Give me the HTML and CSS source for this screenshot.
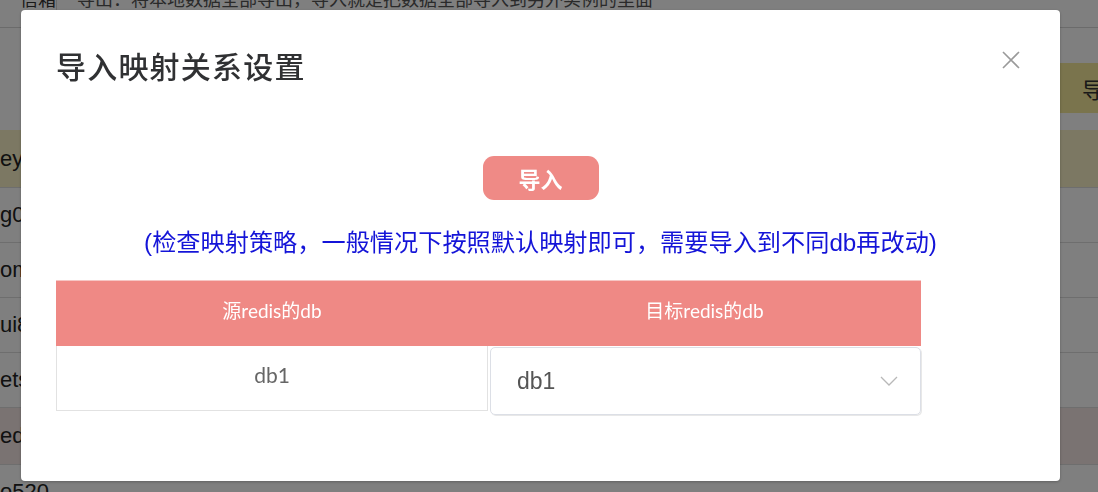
FILE: index.html
```html
<!DOCTYPE html>
<html lang="zh-CN">
<head>
<meta charset="utf-8">
<title>导入映射关系设置</title>
<link rel="stylesheet" href="styles.css">
</head>
<body>
<div class="page">
  <div class="topbar">
    <span class="tb-left">信箱</span>
    <span class="tb-text">导出：将本地数据全部导出，导入就是把数据全部导入到另外实例的里面</span>
  </div>
  <div class="toolbar">
    <div class="yellow-btn">导入</div>
  </div>
  <div class="rows">
    <div class="row hl">ey</div>
    <div class="row">g0</div>
    <div class="row">om</div>
    <div class="row">ui8</div>
    <div class="row">ets</div>
    <div class="row pink">edis</div>
    <div class="row">o520</div>
  </div>
</div>
<div class="mask"></div>
<div class="dialog">
  <div class="dialog-header">
    <h2 class="dialog-title">导入映射关系设置</h2>
    <span class="dialog-close">
      <svg width="18" height="18" viewBox="0 0 18 18"><path d="M1 1 L17 17 M17 1 L1 17" stroke="#9a9a9a" stroke-width="1.6" fill="none"/></svg>
    </span>
  </div>
  <div class="dialog-body">
    <button class="import-btn">导入</button>
    <p class="hint">(检查映射策略，一般情况下按照默认映射即可，需要导入到不同db再改动)</p>
    <div class="map-table">
      <div class="th">源redis的db</div>
      <div class="th">目标redis的db</div>
      <div class="td">db1</div>
      <div class="td-select">
        <div class="select">
          <span class="select-value">db1</span>
          <svg class="chevron" width="18" height="10" viewBox="0 0 18 10"><path d="M1 1 L9 9 L17 1" stroke="#b8b8b8" stroke-width="1.3" fill="none"/></svg>
        </div>
      </div>
    </div>
  </div>
</div>
</body>
</html>
```

FILE: styles.css
```css
html, body {
  margin: 0;
  padding: 0;
  width: 1098px;
  height: 492px;
  overflow: hidden;
  background: #ffffff;
  font-family: "Noto Sans CJK SC", "Noto Sans", sans-serif;
}

/* underlying page */
.page {
  width: 1098px;
}
.topbar {
  height: 27px;
  border-bottom: 1px solid #d6d6d6;
  display: flex;
  align-items: flex-start;
  overflow: hidden;
}
.tb-left {
  width: 57px;
  border-right: 1px solid #d6d6d6;
  height: 27px;
  font-size: 18px;
  line-height: 20px;
  margin-top: -12px;
  color: #333;
  text-align: right;
  box-sizing: border-box;
}
.tb-text {
  padding-left: 20px;
  font-size: 18px;
  line-height: 20px;
  margin-top: -12px;
  color: #555;
  white-space: nowrap;
}
.toolbar {
  height: 102px;
  display: flex;
  justify-content: flex-end;
  padding-top: 35px;
  box-sizing: border-box;
}
.yellow-btn {
  width: 140px;
  height: 50px;
  margin-right: -42px;
  background: #f4e99a;
  color: #333;
  font-size: 22px;
  line-height: 50px;
  padding-left: 82px;
  box-sizing: border-box;
  white-space: nowrap;
  overflow: hidden;
}
.rows {
  display: flex;
  flex-direction: column;
}
.row {
  height: 55px;
  border-bottom: 1px solid #dcdcdc;
  box-sizing: border-box;
  display: flex;
  align-items: center;
  font-family: "Liberation Sans", Arial, sans-serif;
  font-size: 22px;
  color: #222;
}
.row.hl {
  height: 58px;
  background: #f8f1c6;
}
.row.pink {
  height: 57px;
  background: #f4e6e5;
}

.mask {
  position: fixed;
  inset: 0;
  background: rgba(0, 0, 0, 0.5);
}

/* dialog */
.dialog {
  position: fixed;
  left: 21px;
  top: 10px;
  width: 1039px;
  height: 471px;
  background: #ffffff;
  border-radius: 4px;
  box-shadow: 0 1px 3px rgba(0, 0, 0, 0.25);
  display: flex;
  flex-direction: column;
}
.dialog-header {
  display: flex;
  justify-content: space-between;
  align-items: center;
  padding: 35px 40px 0 35px;
}
.dialog-title {
  margin: 0;
  font-size: 30px;
  line-height: 40px;
  font-weight: 500;
  color: #303133;
  letter-spacing: 1.2px;
}
.dialog-close {
  display: flex;
  margin-top: -10px;
}
.dialog-body {
  padding: 71px 35px 0 35px;
  display: flex;
  flex-direction: column;
  align-items: center;
}
.import-btn {
  width: 116px;
  height: 44px;
  border: none;
  border-radius: 11px;
  background: #ef8a86;
  color: #ffffff;
  font-family: "Noto Sans CJK SC", sans-serif;
  font-size: 22px;
  font-weight: 700;
  padding: 0;
}
.hint {
  margin: 27px 0 0 0;
  font-size: 24.2px;
  line-height: 32px;
  color: #1414d8;
  font-family: "Liberation Sans", "Noto Sans CJK SC", sans-serif;
  white-space: nowrap;
}
.map-table {
  align-self: flex-start;
  margin-top: 21px;
  width: 865px;
  display: grid;
  grid-template-columns: 432px 433px;
  align-items: start;
}
.th {
  height: 66px;
  background: #ef8985;
  border-top: 1px solid #f6c6c4;
  box-sizing: border-box;
  color: #ffffff;
  font-family: "Lato", "Noto Sans CJK SC", sans-serif;
  font-size: 19px;
  line-height: 60px;
  text-align: center;
}
.td {
  height: 65px;
  border: 1px solid #e2e2e2;
  border-top: none;
  box-sizing: border-box;
  font-family: "Lato", sans-serif;
  font-size: 21px;
  color: #666;
  text-align: center;
  line-height: 58px;
}
.td-select {
  padding-top: 1px;
  padding-left: 2px;
}
.select {
  height: 68px;
  border: 1px solid #dcdfe6;
  border-radius: 5px;
  box-sizing: border-box;
  display: flex;
  align-items: center;
  justify-content: space-between;
  padding: 0 22px 0 26px;
  box-shadow: 1px 1px 0 #e8e8e8;
}
.select-value {
  font-family: "Liberation Sans", Arial, sans-serif;
  font-size: 23px;
  color: #555;
}
.chevron {
  display: block;
}
```
